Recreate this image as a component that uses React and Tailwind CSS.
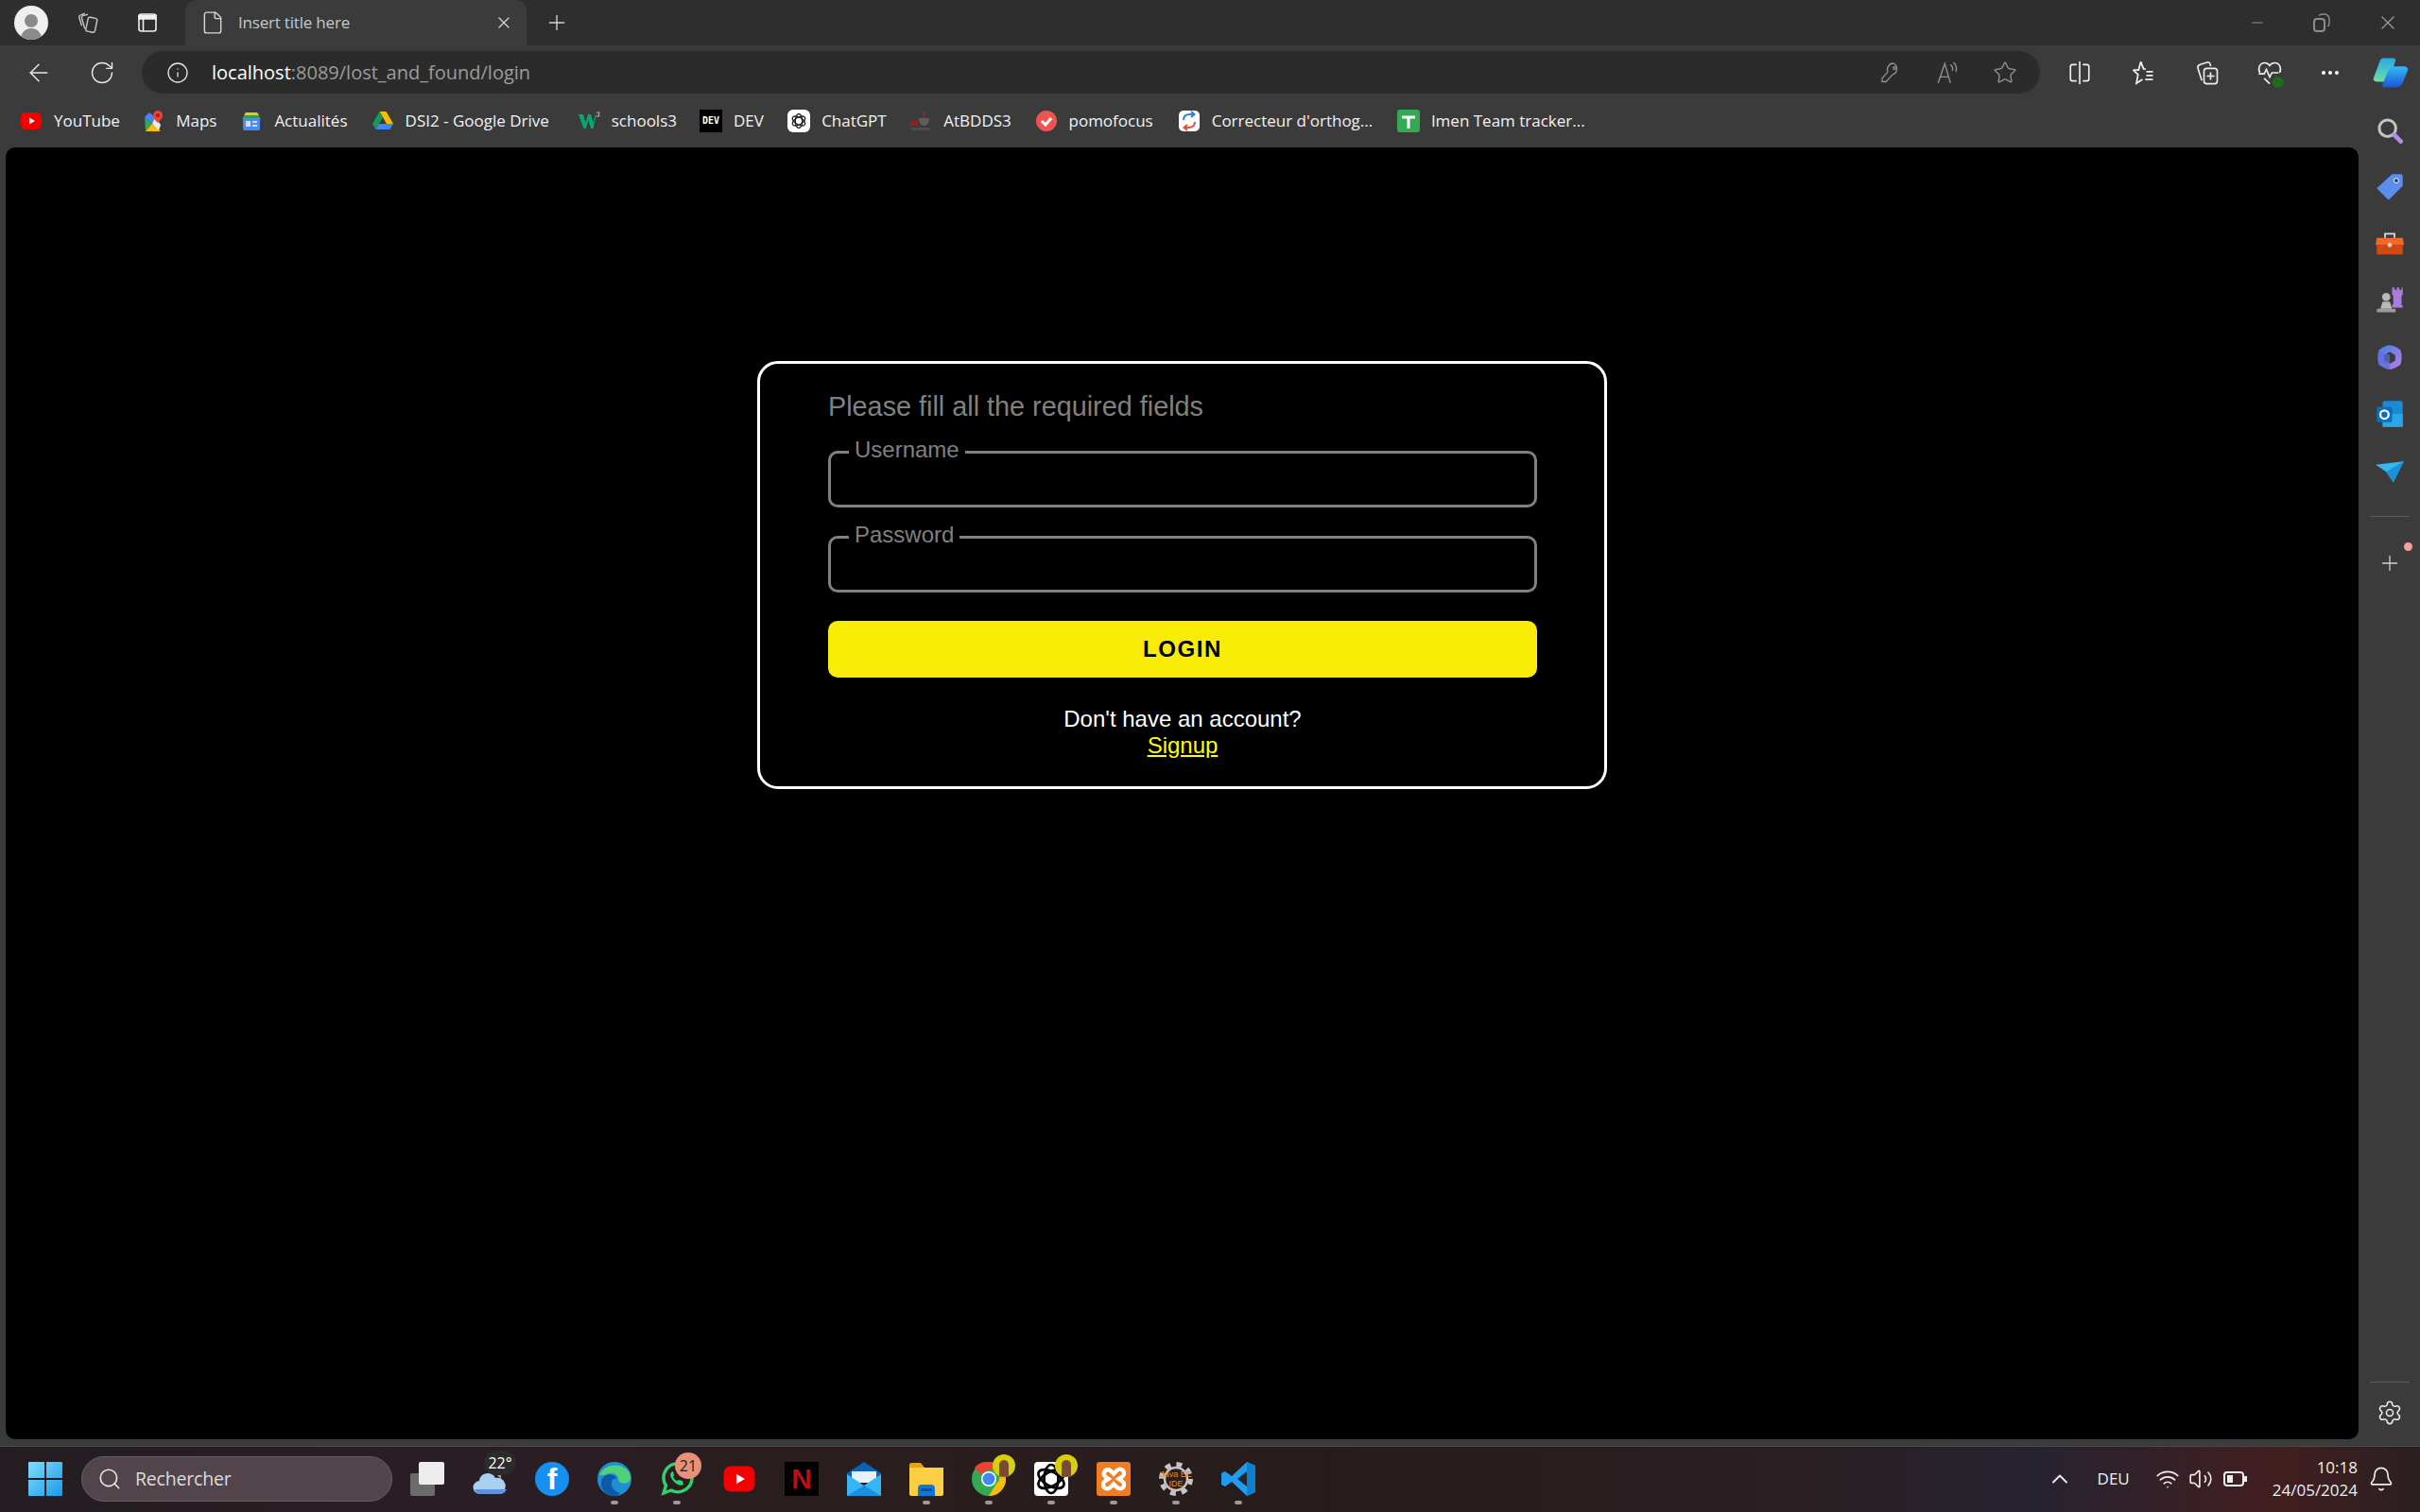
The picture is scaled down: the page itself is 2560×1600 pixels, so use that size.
import React from 'react';
import {
  ArrowLeft, Bell, ChevronUp, File, Info, Minus, Plus, RotateCw, Search, Settings, Star, Volume2, Wifi, X,
} from 'lucide-react';

const uiFont = "font-['Open_Sans','Noto_Sans',sans-serif]";

/* ---------- small logos ---------- */

const YoutubeLogo = ({ size = 24 }) => (
  <svg width={size} height={size} viewBox="0 0 24 24">
    <rect x="1" y="3" width="22" height="18" rx="5" fill="#f40000" />
    <path d="M10 8.5v7l6-3.5z" fill="#fff" />
  </svg>
);

const MapsLogo = () => (
  <svg width="24" height="24" viewBox="0 0 24 24">
    <path d="M3 8l8 7-7 8z" fill="#34a853" />
    <path d="M3 8l5-5 6 5-3 7z" fill="#4285f4" />
    <path d="M11 15l9 8H4z" fill="#fbbc04" />
    <path d="M14 8l6 8-2 6-7-7z" fill="#e8eaed" />
    <path d="M17 1a5 5 0 015 5c0 4-5 8-5 8s-5-4-5-8a5 5 0 015-5z" fill="#ea4335" />
    <circle cx="17" cy="6" r="2" fill="#a51c14" />
  </svg>
);

const NewsLogo = () => (
  <svg width="24" height="24" viewBox="0 0 24 24">
    <path d="M5 5h14l3 5H2z" fill="#2f9e57" />
    <path d="M6 3h12l2 3H4z" fill="#f6bf26" />
    <rect x="3" y="9" width="18" height="13" rx="2" fill="#4c8bf5" />
    <rect x="6" y="12" width="5" height="6" fill="#cfe0fc" />
    <rect x="13" y="12" width="5" height="2" fill="#cfe0fc" />
    <rect x="13" y="16" width="5" height="2" fill="#cfe0fc" />
  </svg>
);

const DriveLogo = () => (
  <svg width="24" height="24" viewBox="0 0 24 24">
    <path d="M8.5 2h7l7.5 13h-7z" fill="#fbbc04" />
    <path d="M8.5 2L1 15l3.5 6L12 8z" fill="#0f9d58" />
    <path d="M8 15h15l-3.5 6h-15z" fill="#4285f4" />
  </svg>
);

const W3Logo = () => (
  <svg width="24" height="24" viewBox="0 0 24 24">
    <path d="M1 5h5l2.500 9L11 5h3l2.500 9L19 5h1l-3.500 15h-2.500L11.500 11 9 20H6.500z" fill="#04aa6d" />
    <path d="M20 3h3v1l-1 1 1 1v1h-3" fill="none" stroke="#d8d8d8" strokeWidth="0.8" />
  </svg>
);

const OpenAiKnot = ({ size = 18, color = '#222' }) => (
  <svg width={size} height={size} viewBox="0 0 24 24" fill="none" stroke={color} strokeWidth="1.800">
    <ellipse cx="12" cy="12" rx="5" ry="10" />
    <ellipse cx="12" cy="12" rx="5" ry="10" transform="rotate(60 12 12)" />
    <ellipse cx="12" cy="12" rx="5" ry="10" transform="rotate(120 12 12)" />
  </svg>
);

const OraLogo = () => (
  <svg width="24" height="24" viewBox="0 0 24 24">
    <path d="M15 2c3 3-2 5 1 9" fill="none" stroke="#8f2f2f" strokeWidth="1.800" />
    <path d="M10 9h11c0 6-3 8-5.500 8S10 15 10 9z" fill="#5e5e5e" />
    <rect x="1" y="12" width="8" height="5" fill="#8c2323" />
    <rect x="2" y="19" width="20" height="3" fill="#4c4c4c" />
  </svg>
);

const CorrectorLogo = () => (
  <svg width="24" height="24" viewBox="0 0 24 24">
    <rect x="1" y="1" width="22" height="22" rx="5" fill="#fff" />
    <path d="M6 11c0-4 3-6 7-6h4M14 2l3.500 3L14 8" fill="none" stroke="#2f80d8" strokeWidth="2" />
    <path d="M18 13c0 4-3 6-7 6H7M10 16l-3.500 3 3.500 3" fill="none" stroke="#e4502e" strokeWidth="2" />
  </svg>
);

const SheetLogo = () => (
  <svg width="24" height="24" viewBox="0 0 24 24">
    <rect x="0" y="0" width="24" height="24" rx="3" fill="#34a853" />
    <path d="M5 8h14M12 8v12" stroke="#fff" strokeWidth="3" />
  </svg>
);

const PomoLogo = () => (
  <svg width="24" height="24" viewBox="0 0 24 24">
    <circle cx="12" cy="12" r="11" fill="#ef5350" />
    <path d="M7 12l4 4 6-7" fill="none" stroke="#fff" strokeWidth="3" />
  </svg>
);

const DevLogo = () => (
  <span className="flex h-[24px] w-[24px] items-center justify-center bg-black font-['DejaVu_Sans_Mono',monospace] text-[10px] font-bold text-white">
    DEV
  </span>
);

const GptLogo = () => (
  <span className="flex h-[24px] w-[24px] items-center justify-center rounded-[6px] bg-white">
    <OpenAiKnot />
  </span>
);

const bookmarks = [
  { icon: <YoutubeLogo />, label: 'YouTube', w: 68 },
  { icon: <MapsLogo />, label: 'Maps', w: 43 },
  { icon: <NewsLogo />, label: 'Actualités', w: 77 },
  { icon: <DriveLogo />, label: 'DSI2 - Google Drive', w: 157 },
  { icon: <W3Logo />, label: 'schools3', w: 68 },
  { icon: <DevLogo />, label: 'DEV', w: 32 },
  { icon: <GptLogo />, label: 'ChatGPT', w: 68 },
  { icon: <OraLogo />, label: 'AtBDDS3', w: 71 },
  { icon: <PomoLogo />, label: 'pomofocus', w: 90 },
  { icon: <CorrectorLogo />, label: "Correcteur d'orthog...", w: 171 },
  { icon: <SheetLogo />, label: 'Imen Team tracker...', w: 158 },
];

/* ---------- toolbar icons ---------- */

const TabsIcon = () => (
  <svg width="26" height="26" viewBox="0 0 24 24" fill="none" stroke="#c8c8c8" strokeWidth="1.300">
    <rect x="11" y="7" width="9" height="14" rx="2" transform="rotate(12 15 14)" />
    <path d="M9 18L6 7.500a2 2 0 011.500-2.500L12 4" />
    <path d="M6 15L3.500 7a2 2 0 011.500-2.500L9 3" />
  </svg>
);

const SideTabIcon = () => (
  <svg width="24" height="24" viewBox="0 0 24 24" fill="none" stroke="#f0f0f0" strokeWidth="1.600">
    <rect x="3" y="3" width="18" height="18" rx="2.500" />
    <path d="M3 4.500h18V8H3z" fill="#f0f0f0" />
    <path d="M7.500 8v13" />
  </svg>
);

const RestoreIcon = () => (
  <svg width="18" height="20" viewBox="0 0 18 20" fill="none" stroke="#8e8e8e" strokeWidth="2">
    <rect x="1" y="6" width="11" height="13" rx="3" />
    <path d="M6 2.500C7 1.500 8 1 10 1h2a5 5 0 015 5v4c0 2-.5 3-1.500 4" strokeWidth="1.400" />
  </svg>
);

const KeyIcon = () => (
  <svg width="24" height="24" viewBox="0 0 24 24" fill="none" stroke="#8f8f8f" strokeWidth="1.300">
    <path d="M15 2a6.500 6.500 0 00-6 9L3 18v3.500h4L14 14a6.500 6.500 0 001-12z" />
    <circle cx="16" cy="7" r="1.300" />
  </svg>
);

const ReadIcon = () => (
  <svg width="26" height="26" viewBox="0 0 24 24" fill="none" stroke="#8f8f8f" strokeWidth="1.300">
    <path d="M3 22L9.500 3 15 22M5 16h8.500" />
    <path d="M15 4c2 1.500 2.500 4 2 6M18 2c2.500 2 3.500 6 2.500 9" />
  </svg>
);

const SplitIcon = () => (
  <svg width="26" height="26" viewBox="0 0 24 24" fill="none" stroke="#eee" strokeWidth="1.500">
    <path d="M9 4H5a2 2 0 00-2 2v12a2 2 0 002 2h4M15 4h4a2 2 0 012 2v12a2 2 0 01-2 2h-4M12 1v22" />
  </svg>
);

const FavListIcon = () => (
  <svg width="28" height="28" viewBox="0 0 24 24" fill="none" stroke="#eee" strokeWidth="1.500">
    <path d="M10 2l2.500 6.500 2 .2M3 9.500l5 .0L10 2M3 9.500l4.500 4L6 21.500l5.500-3.500" />
    <path d="M15 11h6M15 14.500h6M14 18h7" />
  </svg>
);

const CollectionIcon = () => (
  <svg width="28" height="28" viewBox="0 0 24 24" fill="none" stroke="#eee" strokeWidth="1.400">
    <path d="M7 19L3.500 8a3 3 0 012-3.500L12 2.500a2 2 0 012.500 1.500l.6 2" />
    <rect x="9" y="8" width="12" height="14" rx="2.500" />
    <path d="M15 11.500v7M11.500 15h7" />
  </svg>
);

const HeartIcon = () => (
  <span className="relative flex h-[28px] w-[28px] items-center justify-center">
    <svg width="28" height="28" viewBox="0 0 24 24" fill="none" stroke="#eee" strokeWidth="1.400">
      <path d="M3 12C1 8 3 3 7.500 3c2 0 3.500 1 4.500 2.500C13 4 14.500 3 16.500 3 21 3 23 8 21 12" />
      <path d="M2 13h5l2-4 3 7 2-4h6M7 17l5 5" />
    </svg>
    <span className="absolute right-[-1px] bottom-[-2px] h-[12px] w-[12px] rounded-full bg-[#1e6b1e]" />
  </span>
);

const CopilotLogo = () => (
  <svg width="38" height="34" viewBox="0 0 40 46" preserveAspectRatio="none">
    <defs>
      <linearGradient id="copA" x1="0" y1="0" x2="0" y2="1">
        <stop offset="0" stopColor="#2aa8e8" />
        <stop offset="1" stopColor="#6fe0a0" />
      </linearGradient>
      <linearGradient id="copB" x1="0" y1="0" x2="0" y2="1">
        <stop offset="0" stopColor="#36b8f5" />
        <stop offset="1" stopColor="#1a55d8" />
      </linearGradient>
    </defs>
    <path d="M12 2h10c3 0 4 2 3 5l-7 26c-1 2-2 3-5 3H6c-4 0-6-3-5-6l7-24c1-3 2-4 4-4z" fill="url(#copA)" />
    <path d="M22 14h12c4 0 6 3 5 6l-6 18c-1 3-3 6-7 6H14c-3 0-4-2-3-5l7-21c1-3 2-4 4-4z" fill="url(#copB)" />
  </svg>
);

/* ---------- sidebar icons ---------- */

const SideSearch = () => (
  <svg width="28" height="28" viewBox="0 0 24 24" fill="none">
    <circle cx="10" cy="10" r="7.500" stroke="#c4c4c4" strokeWidth="2.600" />
    <path d="M16 16l6 6" stroke="#b98be8" strokeWidth="4" strokeLinecap="round" />
  </svg>
);

const SideTag = () => (
  <svg width="30" height="30" viewBox="0 0 24 24">
    <path d="M14 1h7a2 2 0 012 2v8L11 23 1 13z" fill="#5b8def" />
    <circle cx="17.500" cy="6.500" r="2" fill="#1d3f88" stroke="#fff" strokeWidth="0.800" />
  </svg>
);

const SideTools = () => (
  <svg width="30" height="30" viewBox="0 0 24 24">
    <path d="M8 7V3.500h8V7" fill="none" stroke="#ddd" strokeWidth="1.400" />
    <path d="M1 7h22l1 6H0z" fill="#f0692a" />
    <path d="M1 13h22v8H1z" fill="#d04a12" />
    <circle cx="12" cy="13" r="1.800" fill="#d8d8d8" />
  </svg>
);

const SideChess = () => (
  <svg width="30" height="30" viewBox="0 0 24 24">
    <circle cx="9" cy="9" r="3.500" fill="#b8b8b8" />
    <path d="M6 13h6l2 6H4z" fill="#b8b8b8" />
    <rect x="1" y="19" width="16" height="3" rx="1" fill="#9a9a9a" />
    <path d="M14 1h2v2h2V1h2v2h2V1h1v6l-1 1v8h1v2h-9v-2l1-1V8l-1-1z" fill="#a97de0" />
  </svg>
);

const SideOffice = () => (
  <svg width="28" height="28" viewBox="0 0 24 24">
    <defs>
      <linearGradient id="off" x1="0" y1="0" x2="1" y2="1">
        <stop offset="0" stopColor="#3f7fe0" />
        <stop offset="1" stopColor="#c07ce8" />
      </linearGradient>
    </defs>
    <path d="M12 1c3 0 9 3 10 5 1 3 1 9 0 12-1 2-7 5-10 5s-9-3-10-5C1 15 1 9 2 6c1-2 7-5 10-5z" fill="url(#off)" />
    <path d="M12 7l5 3v5l-5 3-5-3v-5z" fill="#3b3b3b" />
    <path d="M2 6l10 4v13c-3 0-9-3-10-5C1 15 1 9 2 6z" fill="#5a6fe0" opacity="0.7" />
  </svg>
);

const SideOutlook = () => (
  <svg width="30" height="30" viewBox="0 0 24 24">
    <rect x="6" y="1" width="17" height="22" rx="1.500" fill="#1a8ad4" />
    <path d="M6 12h17v11H6z" fill="#28a8ea" />
    <rect x="1" y="6" width="13" height="13" rx="1.500" fill="#0f6cbd" />
    <circle cx="7.500" cy="12.500" r="3.500" fill="none" stroke="#fff" strokeWidth="1.800" />
  </svg>
);

const SideSend = () => (
  <svg width="30" height="30" viewBox="0 0 24 24">
    <path d="M0 7l24-3-9 18-6-9z" fill="#35b8f0" />
    <path d="M9 13l15-9-9 18z" fill="#1d8fd8" />
  </svg>
);

const sideIcons = [SideSearch, SideTag, SideTools, SideChess, SideOffice, SideOutlook, SideSend];

/* ---------- taskbar icons ---------- */

const WinLogo = () => (
  <svg width="36" height="36" viewBox="0 0 36 36">
    <defs>
      <linearGradient id="win" x1="0" y1="0" x2="1" y2="1">
        <stop offset="0" stopColor="#7fdcff" />
        <stop offset="1" stopColor="#1a9be8" />
      </linearGradient>
    </defs>
    <path d="M0 1a1 1 0 011-1h16v17H0zM19 0h16a1 1 0 011 1v16H19zM0 19h17v17H1a1 1 0 01-1-1zM19 19h17v16a1 1 0 01-1 1H19z" fill="url(#win)" />
  </svg>
);

const TaskView = () => (
  <span className="relative block h-[36px] w-[36px]">
    <span className="absolute top-[12px] left-0 h-[24px] w-[26px] rounded-[2px] bg-[#6b6b6b]" />
    <span className="absolute top-0 left-[9px] h-[24px] w-[27px] rounded-[2px] bg-[#ededed]" />
  </span>
);

const Weather = () => (
  <span className="relative block h-[36px] w-[36px]">
    <svg width="36" height="36" viewBox="0 0 36 36">
      <path d="M22 10h8v8z" fill="#ef8a3c" />
      <path d="M8 34a7 7 0 01-1-14 9 9 0 0117-3 8 8 0 014 17z" fill="#a8d0f5" />
      <path d="M8 34a7 7 0 01-6-5h34a8 8 0 01-8 5z" fill="#5e93d8" />
    </svg>
    <span className={`absolute top-[-12px] left-[12px] flex h-[26px] w-[34px] items-center justify-center rounded-full bg-[#2b2b2b] text-[16px] text-white ${uiFont}`}>
      22°
    </span>
  </span>
);

const Facebook = () => (
  <span className="flex h-[36px] w-[36px] items-end justify-center rounded-full bg-[#1690f0] font-['Liberation_Sans',sans-serif] text-[32px] leading-[36px] font-bold text-white">
    f
  </span>
);

const Edge = () => (
  <svg width="36" height="36" viewBox="0 0 36 36">
    <circle cx="18" cy="18" r="18" fill="#1e8fd5" />
    <path d="M2 14C6 3 22 0 31 8c5 4 5 13 1 14-4 2-10 0-10-4 0-6-9-8-14-4z" fill="#4fd07a" />
    <path d="M18 36C8 36 1 26 5 18c3-6 12-6 15-1-3 0-6 3-5 8 1 4 5 7 9 8-2 2-4 3-6 3z" fill="#0c5aa8" />
  </svg>
);

const Whatsapp = () => (
  <span className="relative block h-[36px] w-[36px]">
    <svg width="36" height="36" viewBox="0 0 36 36" fill="none">
      <path d="M4 33l2.500-8A15 15 0 1112 30z" stroke="#2fd36b" strokeWidth="3.400" />
      <path d="M12 11c-2 3 0 7 3 10s7 5 10 3l-1-4-4-1-2 1c-2-1-3-2-4-4l1-2-1-4z" fill="#2fd36b" />
    </svg>
    <span className={`absolute top-[-10px] left-[16px] flex h-[28px] w-[28px] items-center justify-center rounded-full bg-[#e8907a] text-[16px] text-[#222] ${uiFont}`}>
      21
    </span>
  </span>
);

const Netflix = () => (
  <span className="flex h-[36px] w-[36px] items-center justify-center bg-black font-['Liberation_Sans',sans-serif] text-[30px] font-bold text-[#b8101a]">
    N
  </span>
);

const Mail = () => (
  <svg width="36" height="36" viewBox="0 0 36 36">
    <path d="M0 12L18 0l18 12v5H0z" fill="#0b62b8" />
    <path d="M5 10h26v12H5z" fill="#e8f1fa" />
    <path d="M0 13l18 12 18-12v23H0z" fill="#35b5f2" />
    <path d="M0 36l18-11 18 11z" fill="#1b8fe0" />
  </svg>
);

const Folder = () => (
  <svg width="36" height="36" viewBox="0 0 36 36">
    <path d="M0 3a2 2 0 012-2h10l4 5h18a2 2 0 012 2v6H0z" fill="#e3a21a" />
    <path d="M0 6h36v28a2 2 0 01-2 2H2a2 2 0 01-2-2z" fill="#fdcf45" />
    <path d="M9 36v-8a4 4 0 014-4h10a4 4 0 014 4v8z" fill="#0f78d4" />
    <rect x="12" y="28" width="12" height="3" fill="#0b4f95" />
  </svg>
);

const ProfileBadge = () => (
  <span className="absolute top-[-8px] right-[-10px] flex h-[24px] w-[24px] items-end justify-center overflow-hidden rounded-full bg-[#d4d00e]">
    <span className="h-[18px] w-[10px] rounded-t-full bg-[#7c4a33]" />
  </span>
);

const Chrome = () => (
  <span className="relative block h-[36px] w-[36px]">
    <svg width="36" height="36" viewBox="0 0 36 36">
      <circle cx="18" cy="18" r="18" fill="#34a853" />
      <path d="M18 0a18 18 0 0115.600 9H18a9 9 0 00-8 5L3 6a18 18 0 0115-6z" fill="#ea4335" />
      <path d="M33.600 9A18 18 0 0118 36l8-13a9 9 0 000-14z" fill="#fbbc04" />
      <circle cx="18" cy="18" r="8" fill="#fff" />
      <circle cx="18" cy="18" r="6.500" fill="#4285f4" />
    </svg>
    <ProfileBadge />
  </span>
);

const GptTask = () => (
  <span className="relative flex h-[36px] w-[36px] items-center justify-center rounded-[4px] bg-white">
    <OpenAiKnot size={36} color="#000" />
    <ProfileBadge />
  </span>
);

const Xampp = () => (
  <span className="flex h-[36px] w-[36px] items-center justify-center rounded-[3px] bg-[#f07d22]">
    <svg width="26" height="26" viewBox="0 0 24 24" fill="none" stroke="#fff" strokeWidth="4">
      <path d="M7 3a4 4 0 00-3 7l3 2-3 2a4 4 0 105 6l3-3 3 3a4 4 0 105-6l-3-2 3-2a4 4 0 10-5-6l-3 3-3-3a4 4 0 00-2-1z" />
    </svg>
  </span>
);

const JavaIde = () => (
  <span className="relative flex h-[36px] w-[36px] items-center justify-center">
    <svg width="36" height="36" viewBox="0 0 36 36" fill="none">
      <circle cx="18" cy="18" r="15.500" stroke="#c4c4c4" strokeWidth="5" strokeDasharray="6 6.170" />
      <circle cx="18" cy="18" r="12" fill="#26201f" stroke="#c4c4c4" strokeWidth="2.500" />
    </svg>
    <span className="absolute text-center font-['Liberation_Sans',sans-serif] text-[9px] leading-[10px] whitespace-nowrap text-[#f08a24]">
      Java EE
      <br />
      IDE
    </span>
  </span>
);

const VsCode = () => (
  <svg width="36" height="36" viewBox="0 0 36 36">
    <path d="M27 0l9 4v28l-9 4L11 21l-7 5-4-2v-12l4-2 7 5z" fill="#1f9cf0" />
    <path d="M27 10v16l-10-8z" fill="#26262b" />
    <path d="M27 0l9 4v28l-9 4z" fill="#0f7fcc" />
  </svg>
);

const taskbarApps = [
  { icon: <TaskView /> },
  { icon: <Weather /> },
  { icon: <Facebook /> },
  { icon: <Edge />, open: true },
  { icon: <Whatsapp />, open: true },
  { icon: <YoutubeLogo size={36} /> },
  { icon: <Netflix /> },
  { icon: <Mail /> },
  { icon: <Folder />, open: true },
  { icon: <Chrome />, open: true },
  { icon: <GptTask />, open: true },
  { icon: <Xampp />, open: true },
  { icon: <JavaIde />, open: true },
  { icon: <VsCode />, open: true },
];

/* ---------- browser chrome ---------- */

const TabStrip = () => (
  <div className="flex h-[48px] items-center bg-[#2e2e2e]">
    <div className="ml-[15px] flex h-[36px] w-[36px] items-end justify-center overflow-hidden rounded-full bg-[#efefef]">
      <div className="flex flex-col items-center">
        <span className="h-[14px] w-[14px] rounded-full bg-[#8a8a8a]" />
        <span className="mt-[1px] h-[12px] w-[22px] rounded-t-full bg-[#8a8a8a]" />
      </div>
    </div>
    <div className="ml-[29px] flex w-[26px] justify-center"><TabsIcon /></div>
    <div className="ml-[38px] flex w-[24px] justify-center"><SideTabIcon /></div>
    <div className={`ml-[28px] flex h-[48px] w-[361px] items-center self-end rounded-t-[12px] bg-[#3b3b3b] ${uiFont}`}>
      <File size={26} color="#d6d6d6" strokeWidth={1.300} className="ml-[16px]" />
      <span className="ml-[14px] text-[17px] tracking-[-0.2px] text-[#c8c8c8]">Insert title here</span>
      <X size={20} color="#d6d6d6" strokeWidth={1.500} className="mr-[14px] ml-auto" />
    </div>
    <Plus size={26} color="#d0d0d0" strokeWidth={1.300} className="ml-[19px]" />
    <div className="ml-auto flex items-center">
      <Minus size={18} color="#8e8e8e" strokeWidth={1.500} />
      <div className="ml-[50px]"><RestoreIcon /></div>
      <X size={24} color="#9a9a9a" strokeWidth={1.300} className="mr-[22px] ml-[49px]" />
    </div>
  </div>
);

const Toolbar = () => (
  <div className="flex h-[51px] items-end bg-[#3b3b3b]">
    <div className="flex h-[45px] w-full items-center">
      <ArrowLeft size={30} color="#e6e6e6" strokeWidth={1.200} className="ml-[26px]" />
      <RotateCw size={28} color="#e6e6e6" strokeWidth={1.200} className="ml-[38px]" />
      <div className={`ml-[28px] flex h-[45px] w-[2008px] items-center rounded-full bg-[#2b2b2b] ${uiFont}`}>
        <Info size={24} color="#e6e6e6" strokeWidth={1.300} className="ml-[26px]" />
        <span className="ml-[24px] text-[20px] text-white">
          localhost<span className="text-[#9c9c9c]">:8089/lost_and_found/login</span>
        </span>
        <div className="mr-[24px] ml-auto flex items-center gap-[35px]">
          <KeyIcon />
          <ReadIcon />
          <Star size={26} color="#8f8f8f" strokeWidth={1.300} />
        </div>
      </div>
      <div className="ml-[29px] flex items-center">
        <SplitIcon />
        <div className="ml-[40px]"><FavListIcon /></div>
        <div className="ml-[40px]"><CollectionIcon /></div>
        <div className="ml-[38px]"><HeartIcon /></div>
        <div className="ml-[41px] flex gap-[3px]">
          <span className="h-[4px] w-[4px] rounded-full bg-white" />
          <span className="h-[4px] w-[4px] rounded-full bg-white" />
          <span className="h-[4px] w-[4px] rounded-full bg-white" />
        </div>
        <div className="ml-[36px]"><CopilotLogo /></div>
      </div>
    </div>
  </div>
);

const BookmarkBar = () => (
  <div className={`flex h-[57px] items-center gap-[25.200px] pl-[21px] text-[17px] ${uiFont}`}>
    {bookmarks.map((b) => (
      <div key={b.label} className="flex items-center gap-[12px]">
        <span className="flex h-[24px] w-[24px] items-center justify-center">{b.icon}</span>
        <span className="whitespace-nowrap text-[#f2f2f2]" style={{ width: b.w }}>{b.label}</span>
      </div>
    ))}
  </div>
);

const Sidebar = () => (
  <div className="flex w-[65px] flex-col items-center pt-[9px]">
    {sideIcons.map((Icon, i) => (
      <div key={i} className="flex h-[60px] w-full items-center justify-center"><Icon /></div>
    ))}
    <div className="mt-[18px] h-px w-[42px] bg-[#5c5c5c]" />
    <div className="relative mt-[27px] flex h-[44px] w-full items-center justify-center">
      <Plus size={26} color="#d0d0d0" strokeWidth={1.200} />
      <span className="absolute top-[0px] right-[8px] h-[9px] w-[9px] rounded-full bg-[#f4a09c]" />
    </div>
    <div className="mt-auto h-px w-[42px] bg-[#5c5c5c]" />
    <Settings size={28} color="#eee" strokeWidth={1.300} className="mt-[18px] mb-[21px]" />
  </div>
);

/* ---------- login form ---------- */

const Field = ({ label }) => (
  <fieldset className="h-[73px] rounded-[10px] border-[3px] border-[#808080] px-[19px]">
    <legend className="px-[6px] pb-[5px] text-[24px] leading-[24px] text-[#808080]">{label}</legend>
  </fieldset>
);

const LoginCard = () => (
  <div className="mx-auto mt-[226px] h-[453px] w-[899px] rounded-[22px] border-[3px] border-white bg-black pt-[29px] pr-[71px] pl-[72px] font-['Liberation_Sans',Arial,sans-serif]">
    <p className="text-[28.8px] leading-[33px] text-[#808080]">Please fill all the required fields</p>
    <div className="mt-[17px] flex flex-col gap-[17px]">
      <Field label="Username" />
      <Field label="Password" />
    </div>
    <button className="mt-[30px] h-[60px] w-full rounded-[10px] bg-[#faed05] text-[24px] font-bold tracking-[1.600px] text-black">
      LOGIN
    </button>
    <div className="mt-[30px] text-center text-[24px] leading-[28px] text-white">
      <p>Don't have an account?</p>
      <a className="text-[#ffff00] underline">Signup</a>
    </div>
  </div>
);

/* ---------- taskbar ---------- */

const Taskbar = () => (
  <div className="flex h-[70px] items-center border-t border-[#4a4a4a] bg-[linear-gradient(90deg,#231d21_0%,#2a1e26_20%,#2a1d1d_35%,#261c1c_55%,#2a2024_75%,#262330_84%,#421e20_94%,#2a2022_100%)] pb-[2px]">
    <div className="ml-[30px]"><WinLogo /></div>
    <div className={`ml-[20px] flex h-[48px] w-[329px] items-center rounded-full border border-[#6a5d62] bg-[#51444a] ${uiFont}`}>
      <Search size={26} color="#e8e8e8" strokeWidth={1.500} className="ml-[16px]" />
      <span className="ml-[14px] text-[19.500px] tracking-[-0.2px] text-[#dcdcdc]">Rechercher</span>
    </div>
    <div className="ml-[4px] flex">
      {taskbarApps.map((app, i) => (
        <div key={i} className="relative flex h-[67px] w-[66px] items-center justify-center">
          {app.icon}
          {app.open && <span className="absolute bottom-[6px] h-[4px] w-[8px] rounded-full bg-[#9a9a9a]" />}
        </div>
      ))}
    </div>
    <div className={`ml-auto flex items-center text-white ${uiFont}`}>
      <ChevronUp size={28} color="#eee" strokeWidth={1.600} />
      <span className="ml-[26px] text-[17px] text-[#eee]">DEU</span>
      <Wifi size={26} color="#eee" strokeWidth={1.500} className="ml-[27px]" />
      <Volume2 size={26} color="#eee" strokeWidth={1.500} className="ml-[9px]" />
      <div className="relative ml-[11px] flex h-[16px] w-[22px] items-center rounded-[4px] border-2 border-[#eee] pl-[2px]">
        <span className="h-[8px] w-[6px] bg-[#eee]" />
        <span className="absolute right-[-5px] h-[6px] w-[3px] bg-[#eee]" />
      </div>
      <div className="ml-[30px] flex flex-col items-end text-[17px] leading-[24px] text-[#eee]">
        <span>10:18</span>
        <span>24/05/2024</span>
      </div>
      <Bell size={28} color="#eee" strokeWidth={1.400} className="mr-[27px] ml-[11px]" />
    </div>
  </div>
);

const App = () => (
  <div className="flex h-screen w-full flex-col overflow-hidden bg-[#3b3b3b]">
    <TabStrip />
    <Toolbar />
    <div className="flex min-h-0 flex-1">
      <div className="flex min-w-0 flex-1 flex-col">
        <BookmarkBar />
        <div className="mb-[7px] ml-[6px] flex-1 rounded-[10px] bg-black">
          <LoginCard />
        </div>
      </div>
      <Sidebar />
    </div>
    <Taskbar />
  </div>
);

export default App;
